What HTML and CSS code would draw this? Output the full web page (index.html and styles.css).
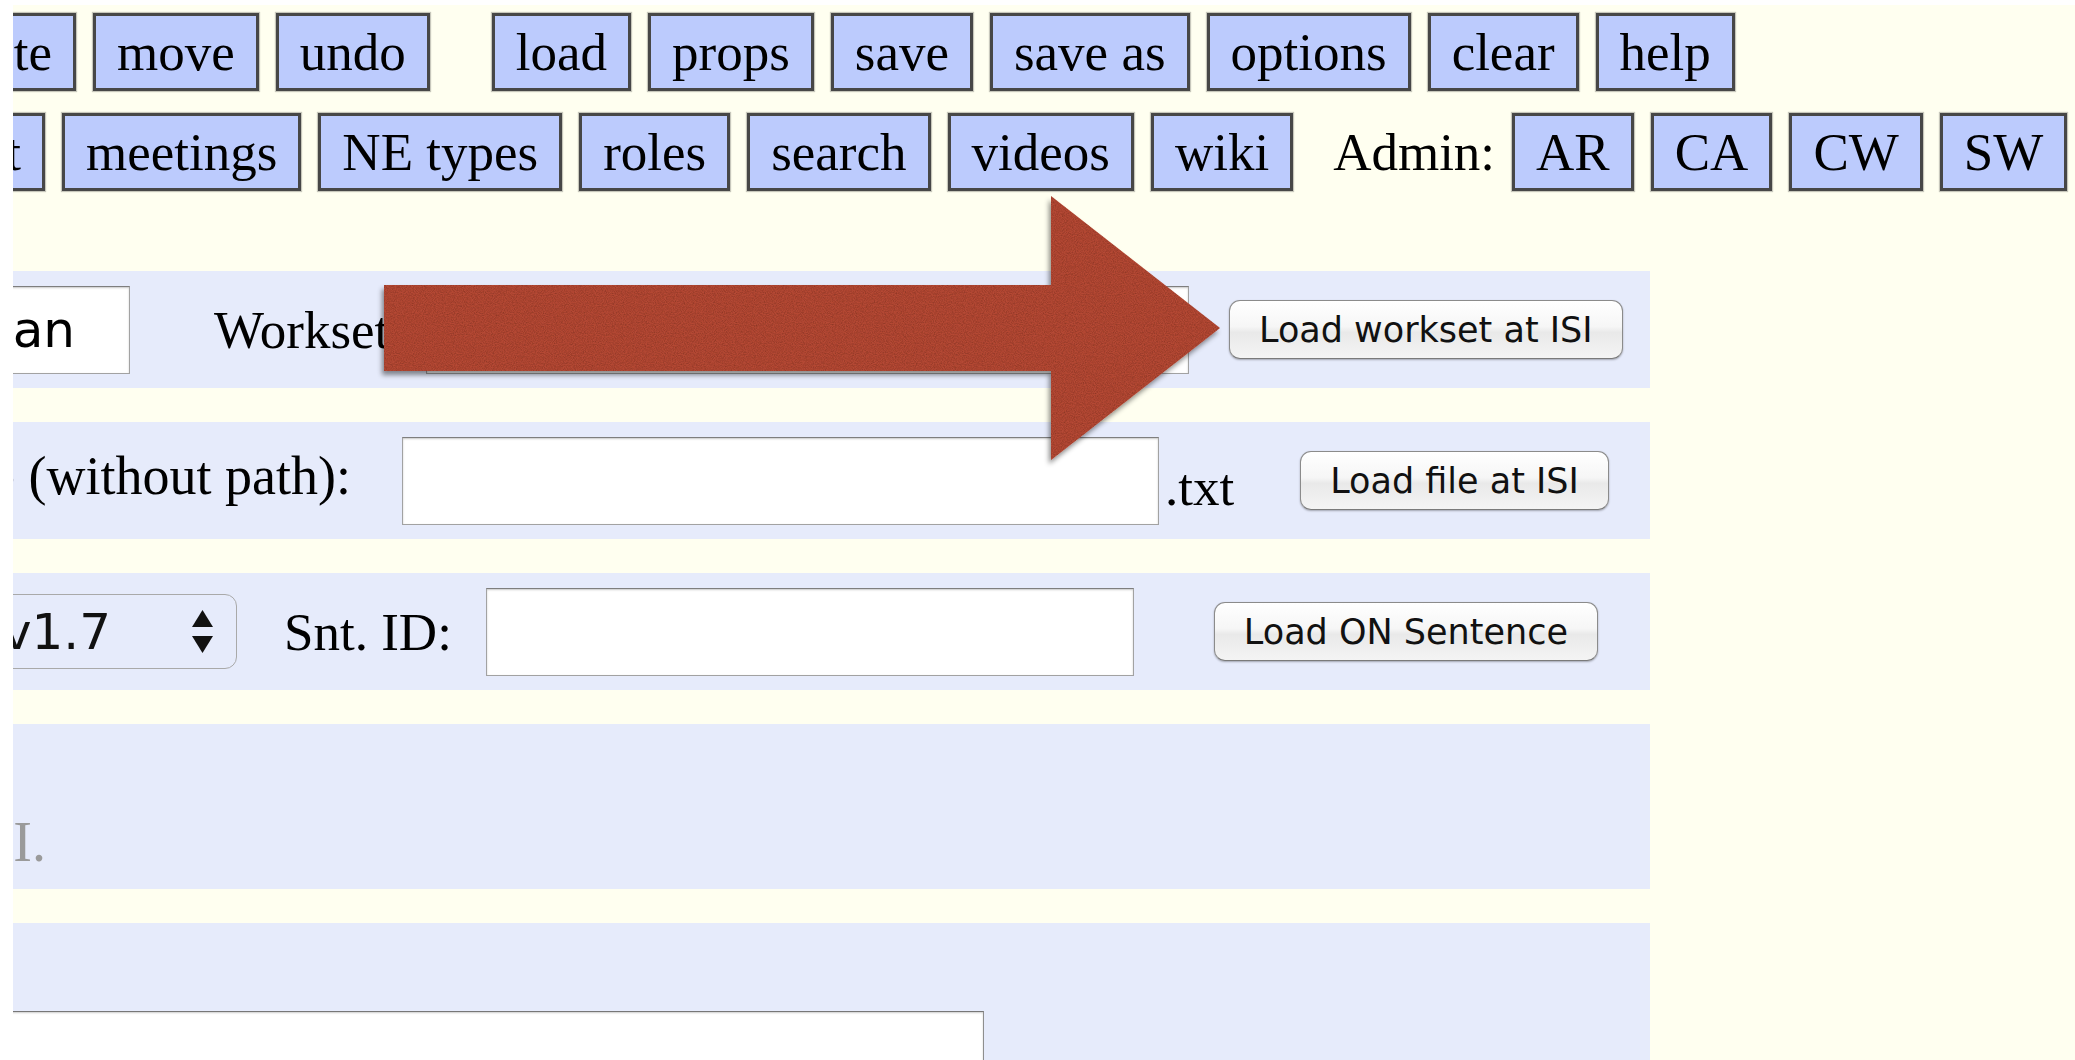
FILE: index.html
```html
<!DOCTYPE html>
<html lang="en">
<head>
<meta charset="utf-8">
<title>AMR Editor – Load</title>
<link rel="stylesheet" href="styles.css">
</head>
<body>
<div class="page">

  <nav class="toolbar">
    <div class="tb-row">
      <div class="lead lead-cmd">
        <a class="btn">add</a><a class="btn">replace</a><a class="btn">delete</a>
      </div>
      <a class="btn">move</a>
      <a class="btn">undo</a>
      <a class="btn group-start">load</a>
      <a class="btn">props</a>
      <a class="btn">save</a>
      <a class="btn">save as</a>
      <a class="btn">options</a>
      <a class="btn">clear</a>
      <a class="btn">help</a>
    </div>
    <div class="tb-row">
      <div class="lead lead-links">
        <a class="btn">guidelines</a><a class="btn">dict</a>
      </div>
      <a class="btn">meetings</a>
      <a class="btn">NE types</a>
      <a class="btn">roles</a>
      <a class="btn">search</a>
      <a class="btn">videos</a>
      <a class="btn">wiki</a>
      <span class="admin-label">Admin:</span>
      <a class="btn">AR</a>
      <a class="btn">CA</a>
      <a class="btn">CW</a>
      <a class="btn">SW</a>
    </div>
  </nav>

  <main class="panels">
    <section class="panel">
      <div class="lead lead-user">
        <span class="label">Username:</span>
        <input class="field field-user" type="text" value="jonathan">
      </div>
      <span class="label lbl-workset">Workset:</span>
      <input class="field field-workset" type="text">
      <button class="mac-btn btn-workset">Load workset at ISI</button>
    </section>

    <section class="panel">
      <div class="lead lead-file">
        <span class="label lbl-file">File name (without path):</span>
      </div>
      <input class="field field-file" type="text">
      <span class="label ext">.txt</span>
      <button class="mac-btn btn-file">Load file at ISI</button>
    </section>

    <section class="panel">
      <div class="lead lead-corpus">
        <div class="select">
          <span class="select-value">OntoNotes v1.7</span>
          <svg class="select-arrows" width="23" height="43" viewBox="0 0 23 43">
            <path d="M11.5 0 L22 17 L1 17 Z" fill="#111"/>
            <path d="M1 26 L22 26 L11.5 43 Z" fill="#111"/>
          </svg>
        </div>
      </div>
      <span class="label lbl-snt">Snt. ID:</span>
      <input class="field field-snt" type="text">
      <button class="mac-btn btn-snt">Load ON Sentence</button>
    </section>

    <section class="panel panel-note">
      <div class="lead lead-note">
        <span class="note">Files and worksets are loaded from your account at ISI.</span>
      </div>
    </section>

    <section class="panel panel-paste">
      <div class="lead lead-paste">
        <textarea class="paste" rows="6"></textarea>
      </div>
    </section>
  </main>

  <!-- call-out arrow pointing at the workset button -->
  <svg class="callout" width="2075" height="1060" viewBox="0 0 2075 1060">
    <defs>
      <filter id="arrowFx" x="-10%" y="-15%" width="120%" height="135%">
        <feGaussianBlur in="SourceAlpha" stdDeviation="2.5" result="blur"/>
        <feOffset in="blur" dx="-2" dy="4" result="offBlur"/>
        <feFlood flood-color="#000" flood-opacity="0.45"/>
        <feComposite in2="offBlur" operator="in" result="shadow"/>
        <feTurbulence type="fractalNoise" baseFrequency="0.9" numOctaves="2" seed="7" result="noise"/>
        <feColorMatrix in="noise" type="matrix" values="0 0 0 0 0  0 0 0 0 0  0 0 0 0 0  0.7 0 0 0 -0.22" result="speck"/>
        <feComposite in="speck" in2="SourceAlpha" operator="in" result="grain"/>
        <feMerge>
          <feMergeNode in="shadow"/>
          <feMergeNode in="SourceGraphic"/>
          <feMergeNode in="grain"/>
        </feMerge>
      </filter>
    </defs>
    <polygon points="384,285 1051,285 1051,196 1220,328 1051,460 1051,371 384,371" fill="#b54834" filter="url(#arrowFx)"/>
  </svg>

</div>
</body>
</html>
```

FILE: styles.css
```css
html, body {
  margin: 0;
  padding: 0;
}

body {
  background: #ffffff;
  font-family: "Liberation Serif", "Times New Roman", serif;
  color: #000;
}

.page {
  position: relative;
  margin: 5px 0 0 13px;
  height: 1055px;
  background: #fffff0;
  overflow: hidden;
}

/* ---------- command toolbar ---------- */

.toolbar {
  display: flex;
  flex-direction: column;
  gap: 22px;
  padding-top: 8px;
}

.tb-row {
  display: flex;
  align-items: center;
  gap: 17px;
  height: 78px;
  white-space: nowrap;
}

/* leading cells: content hugs the right edge and runs off to the left */
.lead {
  flex: none;
  display: flex;
  justify-content: flex-end;
  align-items: center;
  gap: 17px;
  white-space: nowrap;
}

.lead > * {
  flex: none;
}

.lead-cmd   { width: 63px; }
.lead-links { width: 32px; }

.btn {
  flex: none;
  display: block;
  font-size: 53px;
  line-height: 72px;
  padding: 0 21px;
  border: 3px solid #474747;
  background: #bccbfd;
  color: #000;
  box-shadow: 0 0 1px 1px rgba(0, 0, 0, 0.22);
  cursor: pointer;
}

.group-start {
  margin-left: 45px;
}

.admin-label {
  flex: none;
  font-size: 53px;
  margin-left: 23px;
}

/* ---------- load panels ---------- */

.panels {
  display: flex;
  flex-direction: column;
  gap: 34px;
  margin-top: 80px;
}

.panel {
  display: flex;
  align-items: center;
  width: 1637px;
  height: 117px;
  background: #e6ebfb;
  font-size: 53px;
  white-space: nowrap;
}

.label {
  flex: none;
  font-size: 53px;
}

.field {
  flex: none;
  box-sizing: border-box;
  height: 88px;
  background: #fff;
  border: 1px solid #a2a2a2;
  border-top-color: #7e7e7e;
  box-shadow: inset 0 1px 2px rgba(0, 0, 0, 0.22);
  font-family: "DejaVu Sans", "Noto Sans", sans-serif;
  font-size: 50px;
  color: #000;
  padding: 0 8px;
  outline: none;
}

/* row 1 */
.lead-user { width: 117px; }

.field-user {
  width: 420px;
  text-align: right;
  padding-right: 54px;
}

.lbl-workset { margin-left: 84px; }

.field-workset {
  width: 763px;
  margin-left: 22px;
}

/* row 2 */
.lead-file { width: 338px; }

.lbl-file {
  font-size: 54px;
  margin-bottom: 10px;
}

.field-file {
  width: 757px;
  margin-left: 51px;
}

.ext {
  margin-left: 6px;
  margin-top: 12px;
}

/* row 3 */
.lead-corpus { width: 224px; }

.select {
  display: flex;
  align-items: center;
  box-sizing: border-box;
  height: 75px;
  padding: 0 22px 0 12px;
  border: 1px solid #a9a9a9;
  border-radius: 12px;
  font-family: "DejaVu Sans", "Noto Sans", sans-serif;
  font-size: 50px;
  color: #111;
}

.select-arrows {
  margin-left: 80px;
  flex: none;
}

.lbl-snt { margin-left: 47px; }

.field-snt {
  width: 648px;
  margin-left: 34px;
}

/* aqua style push buttons */
.mac-btn {
  flex: none;
  box-sizing: border-box;
  height: 59px;
  padding: 0 29px;
  border: 1px solid #8b8b8b;
  border-bottom-color: #7a7a7a;
  border-radius: 11px;
  background: linear-gradient(#ffffff 0%, #f6f6f6 45%, #e9e9e9 55%, #f4f4f4 100%);
  box-shadow: 0 1px 2px rgba(0, 0, 0, 0.3);
  font-family: "DejaVu Sans", "Noto Sans", sans-serif;
  font-size: 35px;
  color: #111;
  cursor: pointer;
}

.btn-workset { margin-left: 40px; }
.btn-file    { margin-left: 66px; }
.btn-snt     { margin-left: 80px; }

/* row 4: note text */
.panel-note {
  height: 165px;
  align-items: flex-start;
}

.lead-note {
  width: 33px;
  padding-top: 86px;
}

.note {
  font-size: 56px;
  color: #9a9a9a;
}

/* row 5: paste area */
.panel-paste {
  height: 300px;
  align-items: flex-start;
}

.lead-paste {
  width: 971px;
  padding-top: 88px;
}

.paste {
  width: 1300px;
  height: 260px;
  box-sizing: border-box;
  border: 1px solid #8e8e8e;
  border-top-color: #777;
  box-shadow: inset 0 1px 2px rgba(0, 0, 0, 0.2);
  background: #fff;
  resize: none;
}

/* overlay arrow */
.callout {
  position: absolute;
  left: -13px;
  top: -5px;
  pointer-events: none;
}
```
